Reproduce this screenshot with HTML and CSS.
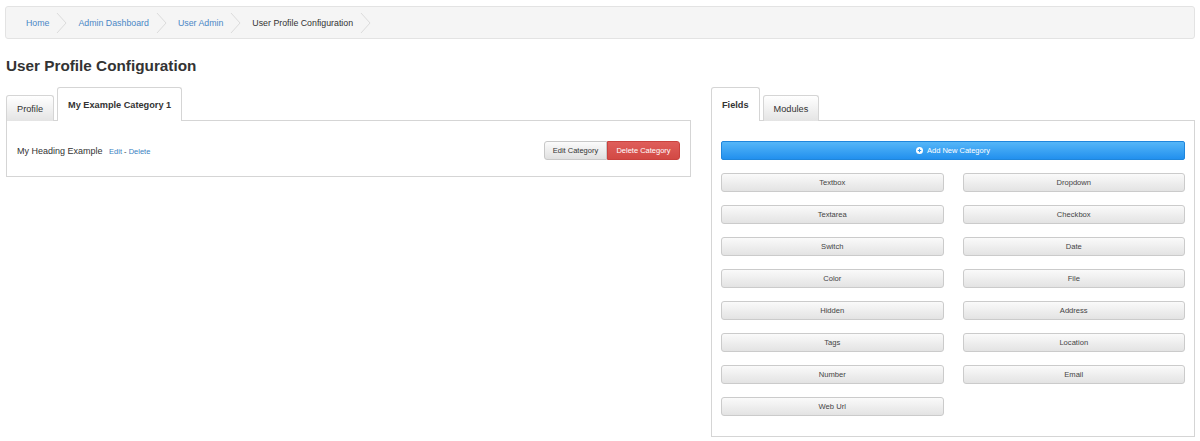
FILE: index.html
```html
<!DOCTYPE html>
<html>
<head>
    <meta charset="utf-8">
    <title>User Profile Configuration</title>
    <link rel="stylesheet" href="styles.css">
</head>
<body>
    <div class="page">
        <nav class="crumbs">
            <span class="crumb"><a href="javascript:;">Home</a><svg class="sep" width="11" height="22" viewBox="0 0 11 22"><polyline points="1,1 10,11 1,21" /></svg></span>
            <span class="crumb"><a href="javascript:;">Admin Dashboard</a><svg class="sep" width="11" height="22" viewBox="0 0 11 22"><polyline points="1,1 10,11 1,21" /></svg></span>
            <span class="crumb"><a href="javascript:;">User Admin</a><svg class="sep" width="11" height="22" viewBox="0 0 11 22"><polyline points="1,1 10,11 1,21" /></svg></span>
            <span class="crumb current">User Profile Configuration<svg class="sep" width="11" height="22" viewBox="0 0 11 22"><polyline points="1,1 10,11 1,21" /></svg></span>
        </nav>

        <h1 class="title">User Profile Configuration</h1>

        <div class="columns">
            <section>
                <ul class="tabs">
                    <li class="tab">Profile</li>
                    <li class="tab active">My Example Category 1</li>
                </ul>
                <div class="panel category">
                    <div class="heading">
                        My Heading Example
                        <span class="links"><a href="javascript:;">Edit</a> - <a href="javascript:;">Delete</a></span>
                    </div>
                    <div class="btn-group">
                        <button class="btn btn-default">Edit Category</button>
                        <button class="btn btn-danger">Delete Category</button>
                    </div>
                </div>
            </section>

            <section>
                <ul class="tabs">
                    <li class="tab active">Fields</li>
                    <li class="tab">Modules</li>
                </ul>
                <div class="panel fields">
                    <button class="btn btn-primary">
                        <svg width="7" height="7" viewBox="0 0 8 8"><circle cx="4" cy="4" r="4" fill="#fff" /><path d="M4 2v4M2 4h4" stroke="#2d95ea" stroke-width="1.3" /></svg>
                        Add New Category
                    </button>
                    <div class="field-list">
                        <button class="btn btn-field">Textbox</button>
                        <button class="btn btn-field">Dropdown</button>
                        <button class="btn btn-field">Textarea</button>
                        <button class="btn btn-field">Checkbox</button>
                        <button class="btn btn-field">Switch</button>
                        <button class="btn btn-field">Date</button>
                        <button class="btn btn-field">Color</button>
                        <button class="btn btn-field">File</button>
                        <button class="btn btn-field">Hidden</button>
                        <button class="btn btn-field">Address</button>
                        <button class="btn btn-field">Tags</button>
                        <button class="btn btn-field">Location</button>
                        <button class="btn btn-field">Number</button>
                        <button class="btn btn-field">Email</button>
                        <button class="btn btn-field">Web Url</button>
                    </div>
                </div>
            </section>
        </div>
    </div>
</body>
</html>
```

FILE: styles.css
```css
html,
body {
    margin: 0;
    padding: 0;
}

body {
    color: #333;
    background: #fff;
    font-family: "Liberation Sans", Arial, sans-serif;
}

a {
    color: #4a87c6;
    text-decoration: none;
}

.page {
    padding: 6px 5px 0 5px;
}

/* breadcrumb */
.crumbs {
    display: flex;
    align-items: center;
    height: 31px;
    padding-left: 20px;
    background: #f5f5f5;
    border: 1px solid #e3e3e3;
    border-radius: 3px;
    font-size: 8.8px;
}

.crumb {
    display: flex;
    align-items: center;
}

.crumb.current {
    color: #333;
}

.sep {
    margin: 0 11px 0 7px;
}

.sep polyline {
    fill: none;
    stroke: #dcdcdc;
    stroke-width: 1;
}

.title {
    margin: 18px 0 0 1px;
    font-size: 15.3px;
    line-height: 18px;
    font-weight: bold;
}

.columns {
    display: grid;
    grid-template-columns: 685px 1fr;
    column-gap: 20px;
    align-items: start;
    margin-top: 12px;
    padding-left: 1px;
}

/* tabs */
.tabs {
    display: flex;
    align-items: flex-end;
    gap: 3px;
    margin: 0 0 -1px;
    padding: 0;
    list-style: none;
}

.tab {
    display: flex;
    align-items: center;
    height: 25px;
    padding: 0 10px;
    font-size: 9.2px;
    border: 1px solid #d5d5d5;
    border-bottom: 0;
    border-radius: 3px 3px 0 0;
    background: linear-gradient(#fff, #e4e4e4);
}

.tab.active {
    position: relative;
    z-index: 1;
    height: 33px;
    padding: 0 10px;
    font-weight: bold;
    background: #fff;
}

.panel {
    border: 1px solid #d5d5d5;
    background: #fff;
}

.category {
    display: flex;
    align-items: center;
    justify-content: space-between;
    padding: 20px 10px 16px 10px;
}

.heading {
    font-size: 9px;
}

.links {
    margin-left: 4px;
    font-size: 7.5px;
}

.links a {
    color: #3a7fc1;
}

/* buttons */
.btn {
    box-sizing: border-box;
    height: 19px;
    margin: 0;
    padding: 0 8px;
    font-family: "Liberation Sans", Arial, sans-serif;
    font-size: 7.5px;
    color: #333;
    white-space: nowrap;
    border: 1px solid #c8c8c8;
    border-radius: 3px;
    background: linear-gradient(#fbfbfb, #e0e0e0);
    cursor: pointer;
}

.btn-group {
    display: flex;
}

.btn-group .btn {
    border-radius: 0;
}

.btn-group .btn:first-child {
    border-radius: 3px 0 0 3px;
}

.btn-group .btn:last-child {
    border-radius: 0 3px 3px 0;
}

.btn-default {
    width: 63px;
    padding: 0;
}

.btn-danger {
    width: 73px;
    padding: 0;
    color: #fff;
    border-color: #c9423e;
    background: linear-gradient(#df5e5a, #d24944);
}

.fields {
    padding: 20px 9px 20px 9px;
}

.btn-primary {
    display: flex;
    align-items: center;
    justify-content: center;
    gap: 4px;
    width: 100%;
    margin-bottom: 13px;
    color: #fff;
    border-color: #1f86dc;
    border-radius: 2px;
    background: linear-gradient(#55b6f8, #2290ee);
}

.field-list {
    display: grid;
    grid-template-columns: 1fr 1fr;
    column-gap: 19px;
    row-gap: 13px;
}

.btn-field {
    font-size: 7.6px;
    color: #444;
    border-color: #cbcbcb;
    background: linear-gradient(#fafafa, #e3e3e3);
}
```
